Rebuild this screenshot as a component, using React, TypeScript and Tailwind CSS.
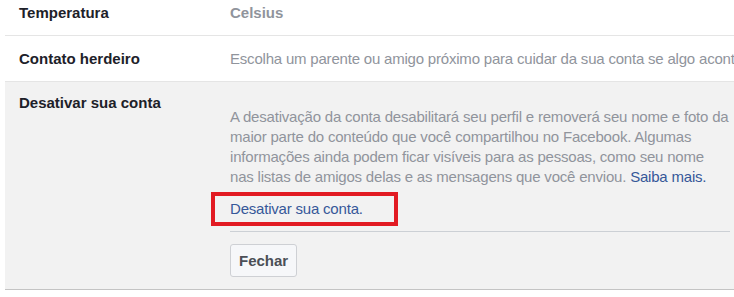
export default function App() {
  return (
    <div className="h-[297px] w-[734px] overflow-hidden bg-white font-['Liberation_Sans',Arial,sans-serif] text-[15px] leading-5">
      <div className="-mt-[10px] ml-[5px]">
        <div className="flex h-[46px] items-center border-b border-[#e5e5e5] pl-[14px]">
          <div className="w-[211px] shrink-0 font-bold text-[#1d2129]">Temperatura</div>
          <div className="font-bold text-[#90949c]">Celsius</div>
        </div>
        <div className="flex h-[46px] items-center border-b border-[#e5e5e5] pl-[14px]">
          <div className="w-[211px] shrink-0 font-bold text-[#1d2129]">Contato herdeiro</div>
          <div className="whitespace-nowrap tracking-[-0.2px] text-[#90949c]">
            Escolha um parente ou amigo próximo para cuidar da sua conta se algo acontecer com você.
          </div>
        </div>
        <div className="relative flex border-b border-[#c4c4c4] bg-[#f2f2f2] pb-[12px] pl-[14px] pt-[11px]">
          <div className="w-[211px] shrink-0 font-bold text-[#1d2129]">Desativar sua conta</div>
          <div className="w-[500px] shrink-0">
            <p className="mt-[14px] tracking-[-0.2px] text-[#90949c]">
              A desativação da conta desabilitará seu perfil e removerá seu nome e foto da maior parte do
              conteúdo que você compartilhou no Facebook. Algumas informações ainda podem ficar visíveis
              para as pessoas, como seu nome nas listas de amigos delas e as mensagens que você enviou.{" "}
              <a className="text-[#365899]" href="#">
                Saiba mais.
              </a>
            </p>
            <div className="mt-[12px] pb-[12px] tracking-[-0.2px]">
              <a className="text-[#365899]" href="#">
                Desativar sua conta.
              </a>
            </div>
            <div className="border-t border-[#ccd0d5] pt-[12px]">
              <button className="h-[33px] rounded-[3px] border border-[#ced0d4] bg-[#f6f7f9] px-[8px] font-bold text-[#4b4f56]">
                Fechar
              </button>
            </div>
          </div>
          <div className="absolute left-[206px] top-[110px] h-[34px] w-[187px] border-4 border-[#e21b23]" />
        </div>
      </div>
    </div>
  );
}
